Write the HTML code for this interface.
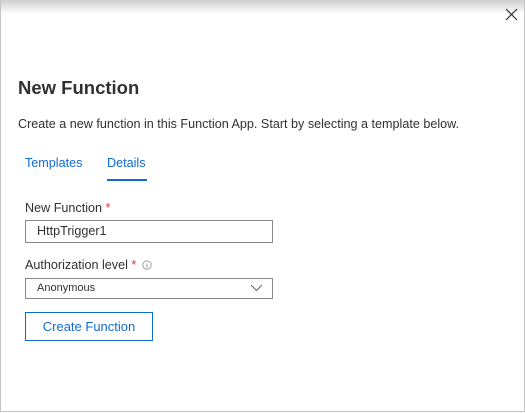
<!DOCTYPE html>
<html><head><meta charset="utf-8"><style>
html,body{margin:0;padding:0;}
body{width:525px;height:413px;position:relative;overflow:hidden;background:#fff;font-family:"Liberation Sans",sans-serif;color:#323130;}
.frame{position:absolute;left:0;top:0;width:523px;height:411px;border:1px solid #c4c4c4;border-top:none;}
.shadow{position:absolute;left:0;top:0;width:525px;height:14px;background:linear-gradient(#cfcfcf,#fff);}
.a{position:absolute;white-space:nowrap;}
.star{color:#d13438;}
.box{position:absolute;border:1px solid #8a8886;box-sizing:border-box;background:#fff;}
</style></head><body>
<div class="shadow"></div>
<div class="frame"></div>
<svg class="a" style="left:505px;top:8px" width="13" height="13" viewBox="0 0 13 13"><path d="M1 1L12 12M12 1L1 12" stroke="#333" stroke-width="1.2"/></svg>
<div class="a" style="left:18px;top:77px;font-size:18.5px;font-weight:bold;">New Function</div>
<div class="a" style="left:18px;top:117px;font-size:12.6px;">Create a new function in this Function App. Start by selecting a template below.</div>
<div class="a" style="left:25px;top:156px;font-size:12.6px;color:#0f6cd6;">Templates</div>
<div class="a" style="left:107px;top:156px;font-size:12.6px;color:#0f6cd6;">Details</div>
<div class="a" style="left:107px;top:179px;width:40px;height:2px;background:#0f6cd6;"></div>
<div class="a" style="left:25px;top:201px;font-size:12.6px;">New Function <span class="star">*</span></div>
<div class="box" style="left:25px;top:220px;width:248px;height:23px;"></div>
<div class="a" style="left:37px;top:224px;font-size:12.6px;">HttpTrigger1</div>
<div class="a" style="left:25px;top:258px;font-size:12.6px;">Authorization level <span class="star">*</span></div>
<svg class="a" style="left:142px;top:260px" width="10" height="10" viewBox="0 0 10 10"><circle cx="5" cy="5" r="4.2" fill="none" stroke="#999" stroke-width="0.9"/><path d="M5 4.2V7.5M5 2.6V3.4" stroke="#999" stroke-width="1"/></svg>
<div class="box" style="left:25px;top:278px;width:248px;height:21px;"></div>
<div class="a" style="left:37px;top:282px;font-size:11px;">Anonymous</div>
<svg class="a" style="left:250px;top:284px" width="13" height="8" viewBox="0 0 13 8"><path d="M1 1L6.5 6.5L12 1" fill="none" stroke="#666" stroke-width="1"/></svg>
<div class="box" style="left:25px;top:312px;width:128px;height:29px;border:1px solid #0f6cd6;"></div>
<div class="a" style="left:25px;top:319px;width:128px;text-align:center;font-size:13px;color:#0f6cd6;">Create Function</div>
</body></html>
